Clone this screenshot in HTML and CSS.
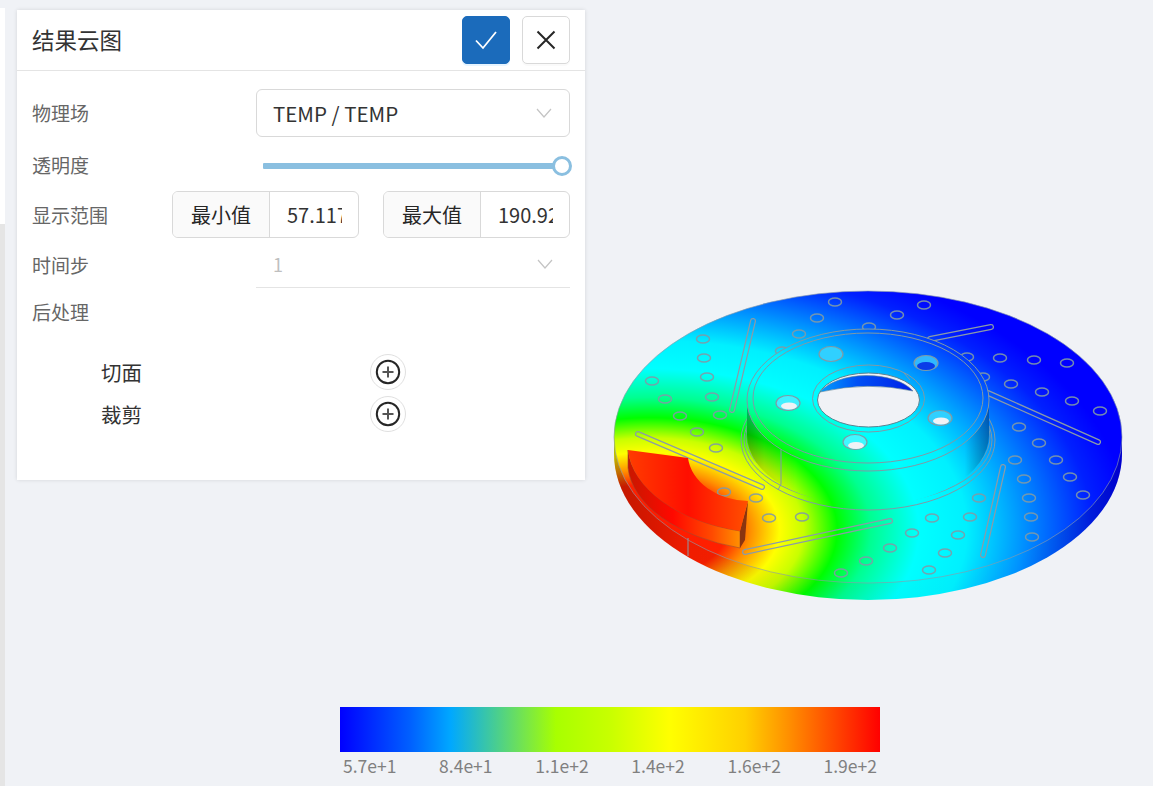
FILE: index.html
```html
<!DOCTYPE html>
<html lang="zh-CN">
<head>
<meta charset="UTF-8">
<title>结果云图</title>
<link rel="stylesheet" href="styles.css">
</head>
<body>
    <div class="side-strip"><div class="side-strip-top"></div></div>

    <div class="panel">
        <div class="panel-header">
            <span class="panel-title">结果云图</span>
            <button class="icon-btn primary">
                <svg width="24" height="24" viewBox="0 0 24 24"><path d="M2 12.5 L9 20 L22 4" fill="none" stroke="#fff" stroke-width="1.8"/></svg>
            </button>
            <button class="icon-btn">
                <svg width="24" height="24" viewBox="0 0 24 24"><path d="M3.500 3.500 L20.500 20.500 M20.500 3.500 L3.500 20.500" fill="none" stroke="#262626" stroke-width="2"/></svg>
            </button>
        </div>
        <div class="panel-body">
            <div class="row row-field">
                <label class="row-label">物理场</label>
                <div class="select boxed">
                    <span>TEMP / TEMP</span>
                    <svg class="chevron" width="16" height="10" viewBox="0 0 16 10"><path d="M1 1 L8 9 L15 1" fill="none" stroke="#c4c4c4" stroke-width="1.200"/></svg>
                </div>
            </div>
            <div class="row row-opacity">
                <label class="row-label">透明度</label>
                <div class="slider"><div class="slider-handle"></div></div>
            </div>
            <div class="row row-range">
                <label class="row-label">显示范围</label>
                <div class="range-group">
                    <div class="addon-input"><span class="addon">最小值</span><span class="addon-value">57.117</span></div>
                    <div class="addon-input"><span class="addon">最大值</span><span class="addon-value">190.92</span></div>
                </div>
            </div>
            <div class="row row-step">
                <label class="row-label">时间步</label>
                <div class="select underlined">
                    <span>1</span>
                    <svg class="chevron" width="16" height="10" viewBox="0 0 16 10"><path d="M1 1 L8 9 L15 1" fill="none" stroke="#c4c4c4" stroke-width="1.200"/></svg>
                </div>
            </div>
            <div class="row row-post">
                <label class="row-label">后处理</label>
            </div>
            <div class="post-list">
                <div class="post-item">
                    <span class="post-name">切面</span>
                    <button class="add-btn">
                        <svg width="26" height="26" viewBox="0 0 26 26"><circle cx="13" cy="13" r="11.200" fill="none" stroke="#262626" stroke-width="2"/><path d="M13 7.500 V18.500 M7.500 13 H18.500" stroke="#555" stroke-width="2"/></svg>
                    </button>
                </div>
                <div class="post-item">
                    <span class="post-name">裁剪</span>
                    <button class="add-btn">
                        <svg width="26" height="26" viewBox="0 0 26 26"><circle cx="13" cy="13" r="11.200" fill="none" stroke="#262626" stroke-width="2"/><path d="M13 7.500 V18.500 M7.500 13 H18.500" stroke="#555" stroke-width="2"/></svg>
                    </button>
                </div>
            </div>
        </div>
    </div>

    <svg class="disc" width="1153" height="786" viewBox="0 0 1153 786">
        <defs>
            <radialGradient id="heat" gradientUnits="userSpaceOnUse" cx="0" cy="0" r="1" gradientTransform="translate(650 530) scale(480 288)">
                <stop offset="0" stop-color="#ff1a00"/>
                <stop offset="0.16" stop-color="#ff2000"/>
                <stop offset="0.21" stop-color="#ff9000"/>
                <stop offset="0.27" stop-color="#ffff00"/>
                <stop offset="0.32" stop-color="#c8ff00"/>
                <stop offset="0.39" stop-color="#00ff00"/>
                <stop offset="0.46" stop-color="#00ff90"/>
                <stop offset="0.56" stop-color="#00ffff"/>
                <stop offset="0.66" stop-color="#00f0ff"/>
                <stop offset="0.78" stop-color="#0090ff"/>
                <stop offset="0.92" stop-color="#0020ff"/>
                <stop offset="1" stop-color="#0000ff"/>
            </radialGradient>
            <linearGradient id="sideShade" x1="0" x2="1" y1="0" y2="0">
                <stop offset="0" stop-color="#000" stop-opacity="0.25"/>
                <stop offset="0.15" stop-color="#000" stop-opacity="0.06"/>
                <stop offset="0.8" stop-color="#000" stop-opacity="0"/>
                <stop offset="1" stop-color="#000" stop-opacity="0.2"/>
            </linearGradient>
            <linearGradient id="hubShade" x1="0" x2="1" y1="0" y2="0">
                <stop offset="0" stop-color="#000" stop-opacity="0.3"/>
                <stop offset="0.07" stop-color="#000" stop-opacity="0.12"/>
                <stop offset="0.2" stop-color="#000" stop-opacity="0"/>
                <stop offset="0.9" stop-color="#000" stop-opacity="0"/>
                <stop offset="1" stop-color="#000" stop-opacity="0.3"/>
            </linearGradient>
            <linearGradient id="holeWall" x1="0" x2="1" y1="0" y2="0">
                <stop offset="0" stop-color="#00a0ff"/>
                <stop offset="0.4" stop-color="#0050f5"/>
                <stop offset="1" stop-color="#0020e8"/>
            </linearGradient>
            <linearGradient id="wedgeWall" x1="0" x2="1" y1="0" y2="0">
                <stop offset="0" stop-color="#c81800"/>
                <stop offset="0.4" stop-color="#ff0800"/>
                <stop offset="0.75" stop-color="#ff4a00"/>
                <stop offset="1" stop-color="#ff9000"/>
            </linearGradient>
            <linearGradient id="wedgeTop" x1="0" x2="1" y1="0" y2="0">
                <stop offset="0" stop-color="#ff3c00"/>
                <stop offset="0.5" stop-color="#ff0e00"/>
                <stop offset="1" stop-color="#ff5000"/>
            </linearGradient>
        </defs>

        <g class="disc-model">
            <!-- rotor side and top face -->
            <path d="M614 437 V454 A254 146 0 0 0 1122 454 V437 Z" fill="url(#heat)"/>
            <path d="M614 437 V454 A254 146 0 0 0 1122 454 V437 Z" fill="url(#sideShade)"/>
            <ellipse cx="868" cy="437" rx="254" ry="146" fill="url(#heat)" stroke="#8a9ba8" stroke-width="0.800" stroke-opacity="0.800"/>
            <path d="M688 538 V556" stroke="#8a9ba8" stroke-width="1"/>

            <!-- drilled holes -->
            <g fill="none" stroke="#7f9aa6" stroke-width="1.500" stroke-opacity="0.900">
                <ellipse cx="835" cy="302" rx="6.500" ry="4"/><ellipse cx="817" cy="318" rx="6.500" ry="4"/><ellipse cx="799" cy="334" rx="6.500" ry="4"/><ellipse cx="782" cy="351" rx="6.500" ry="4"/>
                <ellipse cx="703" cy="339" rx="6.500" ry="4"/><ellipse cx="704" cy="358" rx="6.500" ry="4"/><ellipse cx="707" cy="377" rx="6.500" ry="4"/><ellipse cx="712" cy="397" rx="6.500" ry="4"/>
                <ellipse cx="720" cy="415" rx="6.500" ry="4"/><ellipse cx="652" cy="381" rx="6.500" ry="4"/><ellipse cx="665" cy="399" rx="6.500" ry="4"/><ellipse cx="680" cy="416" rx="6.500" ry="4"/>
                <ellipse cx="697" cy="432" rx="6.500" ry="4"/><ellipse cx="716" cy="448" rx="6.500" ry="4"/><ellipse cx="724" cy="492" rx="6.500" ry="4"/><ellipse cx="756" cy="498" rx="6.500" ry="4"/>
                <ellipse cx="769" cy="518" rx="6.500" ry="4"/><ellipse cx="802" cy="517" rx="6.500" ry="4"/><ellipse cx="841" cy="573" rx="6.500" ry="4"/><ellipse cx="866" cy="561" rx="6.500" ry="4"/>
                <ellipse cx="924" cy="305" rx="6.500" ry="4"/><ellipse cx="897" cy="315" rx="6.500" ry="4"/><ellipse cx="869" cy="327" rx="6.500" ry="4"/><ellipse cx="967" cy="357" rx="6.500" ry="4"/>
                <ellipse cx="1000" cy="358" rx="6.500" ry="4"/><ellipse cx="1034" cy="360" rx="6.500" ry="4"/><ellipse cx="1067" cy="363" rx="6.500" ry="4"/><ellipse cx="983" cy="377" rx="6.500" ry="4"/>
                <ellipse cx="1011" cy="384" rx="6.500" ry="4"/><ellipse cx="1042" cy="392" rx="6.500" ry="4"/><ellipse cx="1072" cy="401" rx="6.500" ry="4"/><ellipse cx="1100" cy="411" rx="6.500" ry="4"/>
                <ellipse cx="1019" cy="427" rx="6.500" ry="4"/><ellipse cx="1039" cy="443" rx="6.500" ry="4"/><ellipse cx="1015" cy="460" rx="6.500" ry="4"/><ellipse cx="1056" cy="460" rx="6.500" ry="4"/>
                <ellipse cx="1024" cy="479" rx="6.500" ry="4"/><ellipse cx="1070" cy="477" rx="6.500" ry="4"/><ellipse cx="1083" cy="495" rx="6.500" ry="4"/><ellipse cx="1029" cy="498" rx="6.500" ry="4"/>
                <ellipse cx="979" cy="498" rx="6.500" ry="4"/><ellipse cx="970" cy="517" rx="6.500" ry="4"/><ellipse cx="1031" cy="517" rx="6.500" ry="4"/><ellipse cx="932" cy="518" rx="6.500" ry="4"/>
                <ellipse cx="1032" cy="537" rx="6.500" ry="4"/><ellipse cx="958" cy="535" rx="6.500" ry="4"/><ellipse cx="912" cy="533" rx="6.500" ry="4"/><ellipse cx="945" cy="553" rx="6.500" ry="4"/>
                <ellipse cx="890" cy="548" rx="6.500" ry="4"/><ellipse cx="929" cy="570" rx="6.500" ry="4"/>
            </g>

            <!-- slots -->
            <g fill="none" stroke-linecap="round">
                <path d="M753 321 L732 410 M638 434 L762 487 M745 552 L890 521 M930 339 L991 327 M988 393 L1098 442 M1003 467 L983 555" stroke="#8a9ba8" stroke-width="6"/>
                <path d="M753 321 L732 410 M638 434 L762 487 M745 552 L890 521 M930 339 L991 327 M988 393 L1098 442 M1003 467 L983 555" stroke="url(#heat)" stroke-width="3.500"/>
            </g>

            <!-- hub -->
            <ellipse cx="868" cy="440" rx="127" ry="70" fill="url(#heat)" stroke="#7f9aa6" stroke-width="1"/>
            <ellipse cx="868" cy="440" rx="124" ry="64" fill="none" stroke="#7f9aa6" stroke-width="1"/>
            <ellipse cx="868" cy="437" rx="122" ry="63" fill="none" stroke="#7f9aa6" stroke-width="0.800"/>
            <path d="M747 400 V435 A121 71 0 0 0 989 435 V400 Z" fill="url(#heat)"/>
            <path d="M747 400 V435 A121 71 0 0 0 989 435 V400 Z" fill="url(#hubShade)"/>
            <path d="M781 445 V484 L778 490" fill="none" stroke="#7f9aa6" stroke-width="1"/>
            <ellipse cx="868" cy="400" rx="121" ry="71" fill="url(#heat)" stroke="#7f9aa6" stroke-width="1"/>
            <ellipse cx="868" cy="398" rx="115" ry="65" fill="none" stroke="#7f9aa6" stroke-width="1"/>
            <ellipse cx="868.500" cy="398.500" rx="56" ry="33.500" fill="none" stroke="#7f9aa6" stroke-width="1"/>
            <path d="M904 373 L910 380" stroke="#7f9aa6" stroke-width="1"/>

            <!-- bore -->
            <ellipse cx="868.500" cy="400" rx="51" ry="27" fill="#f0f2f6" stroke="#5d8290" stroke-width="1"/>
            <path d="M820 392 A51 27 0 0 1 913 391 Q868 381 820 392 Z" fill="url(#holeWall)" stroke="#5d8290" stroke-width="0.600"/>

            <!-- bolt holes -->
            <g stroke="#7f9aa6" stroke-width="1.200">
                <ellipse cx="831" cy="354" rx="12" ry="7.500" fill="#30d0ff"/>
                <ellipse cx="926" cy="363" rx="12" ry="7.500" fill="#30b8ff"/>
                <ellipse cx="788" cy="403" rx="12" ry="7.500" fill="#40f0ff"/>
                <ellipse cx="940" cy="418" rx="12" ry="7.500" fill="#30d0ff"/>
                <ellipse cx="855" cy="442" rx="12" ry="7.500" fill="#40f8ff"/>
            </g>
            <ellipse cx="926" cy="366" rx="9" ry="4" fill="#0a3ce8"/>
            <ellipse cx="789" cy="406" rx="8" ry="3.500" fill="#f0f2f6"/>
            <ellipse cx="941" cy="421" rx="8" ry="3.500" fill="#f0f2f6"/>
            <ellipse cx="856" cy="445.500" rx="8" ry="3.500" fill="#f0f2f6"/>

            <!-- cut wedge -->
            <path d="M628 450 A150 90 0 0 0 740 531 L740 548 A160 90 0 0 1 628 468 Z" fill="url(#wedgeWall)" stroke="#a04a30" stroke-width="0.600"/>
            <path d="M748 501 L745 540 L740 548 L740 531 Z" fill="#8a3410"/>
            <path d="M628 450 L688 458 A62 48 0 0 0 748 501 L740 531 A150 90 0 0 1 628 450 Z" fill="url(#wedgeTop)"/>
        </g>
    </svg>

    <div class="legend">
        <div class="legend-bar"></div>
        <div class="legend-ticks">
            <span>5.7e+1</span><span>8.4e+1</span><span>1.1e+2</span><span>1.4e+2</span><span>1.6e+2</span><span>1.9e+2</span>
        </div>
    </div>
</body>
</html>
```

FILE: styles.css
```css
html, body {
    margin: 0;
    height: 100%;
    overflow: hidden;
}

body {
    background-color: #f0f2f6;
    color: #262626;
    font-family: "Noto Sans CJK SC", "Noto Sans", sans-serif;
    position: relative;
}

button {
    font-family: inherit;
    cursor: pointer;
}

.side-strip {
    position: absolute;
    left: 0;
    top: 8px;
    bottom: 0;
    width: 5px;
    background-color: #e5e5e5;
}

.side-strip-top {
    height: 216px;
    background-color: #fff;
}

.disc {
    position: absolute;
    left: 0;
    top: 0;
}

.disc-model {
    filter: blur(0.4px);
}

/* floating panel */
.panel {
    position: absolute;
    left: 17px;
    top: 10px;
    width: 568px;
    height: 470px;
    background-color: #fff;
    box-shadow: 0 0 4px rgba(0, 0, 0, 0.12);
    z-index: 2;
}

.panel-header {
    display: flex;
    align-items: center;
    gap: 12px;
    height: 60px;
    padding: 0 15px;
    border-bottom: 1px solid #e4e4e4;
}

.panel-title {
    flex: 1;
    font-size: 22.500px;
    line-height: 30px;
    margin-bottom: 2px;
    color: #333;
}

.icon-btn {
    width: 48px;
    height: 48px;
    padding: 0;
    display: flex;
    align-items: center;
    justify-content: center;
    background-color: #fff;
    border: 1px solid #d9d9d9;
    border-radius: 5px;
    box-shadow: 0 2px 0 rgba(0, 0, 0, 0.02);
}

.icon-btn.primary {
    background-color: #1b6bbb;
    border-color: #1b6bbb;
    box-shadow: 0 2px 0 rgba(5, 145, 255, 0.1);
}

.panel-body {
    padding: 18px 15px 0;
}

.row {
    display: flex;
    align-items: center;
}

.row-label {
    width: 224px;
    flex: none;
    font-size: 19px;
    line-height: 26px;
    color: #666;
}

.row-field {
    height: 48px;
}

.row-opacity {
    height: 38px;
    margin-top: 10px;
}

.row-opacity .row-label {
    margin-top: -2px;
}

.row-range {
    height: 47px;
    margin-top: 6px;
}

.row-range .row-label {
    width: 140px;
}

.row-step {
    height: 47px;
    margin-top: 3px;
}

.row-post {
    height: 36px;
    margin-top: 6px;
}

/* selects */
.select {
    flex: 1;
    height: 47px;
    box-sizing: border-box;
    padding: 0 17px 0 16px;
    display: flex;
    align-items: center;
    justify-content: space-between;
    font-size: 20.500px;
}

.select.boxed {
    height: 48px;
    color: #333;
    background-color: #fff;
    border: 1px solid #d9d9d9;
    border-radius: 6px;
}

.select.underlined {
    padding-left: 17px;
    color: #bfbfbf;
    font-size: 18px;
    border-bottom: 1px solid #e4e4e4;
}

/* slider */
.slider {
    flex: 1;
    height: 6px;
    margin: 0 8px 0 7px;
    position: relative;
    background-color: #8abfe0;
    border-radius: 1px;
}

.slider-handle {
    position: absolute;
    right: -10px;
    top: -7px;
    width: 14px;
    height: 14px;
    background-color: #fff;
    border: 3px solid #8abfe0;
    border-radius: 50%;
}

/* min / max inputs */
.range-group {
    flex: 1;
    min-width: 0;
    display: flex;
    gap: 24px;
}

.addon-input {
    flex: 1 1 0;
    min-width: 0;
    height: 47px;
    display: flex;
    box-sizing: border-box;
    border: 1px solid #d9d9d9;
    border-radius: 6px;
    font-size: 20px;
    overflow: hidden;
}

.addon {
    flex: none;
    width: 96px;
    display: flex;
    align-items: center;
    justify-content: center;
    background-color: #fafafa;
    border-right: 1px solid #d9d9d9;
}

.addon-value {
    flex: 1;
    min-width: 0;
    margin: 0 16px 0 17px;
    white-space: nowrap;
    overflow: hidden;
    line-height: 45px;
    color: #333;
}

/* post-processing list */
.post-list {
    padding-top: 21px;
}

.post-item {
    display: flex;
    align-items: center;
    height: 42px;
    padding-left: 69px;
}

.post-name {
    width: 269px;
    font-size: 20.500px;
    line-height: 28px;
    color: #333;
}

.add-btn {
    width: 36px;
    height: 36px;
    padding: 0;
    display: flex;
    align-items: center;
    justify-content: center;
    background-color: #fff;
    border: 1px solid #e0e0e0;
    border-radius: 50%;
}

/* colour scale */
.legend {
    position: absolute;
    left: 340px;
    top: 707px;
    width: 540px;
}

.legend-bar {
    height: 45px;
    background: linear-gradient(90deg, #0000ff 0%, #0060ff 13%, #00a8ff 20.500%, #a8ff00 40%, #c8ff00 50%, #ffff00 61%, #ffd000 75%, #ff9000 83%, #ff0000 100%);
}

.legend-ticks {
    display: flex;
    justify-content: space-between;
    padding: 2px 3px 0;
    font-size: 17.500px;
    line-height: 24px;
    color: #808080;
}
```
